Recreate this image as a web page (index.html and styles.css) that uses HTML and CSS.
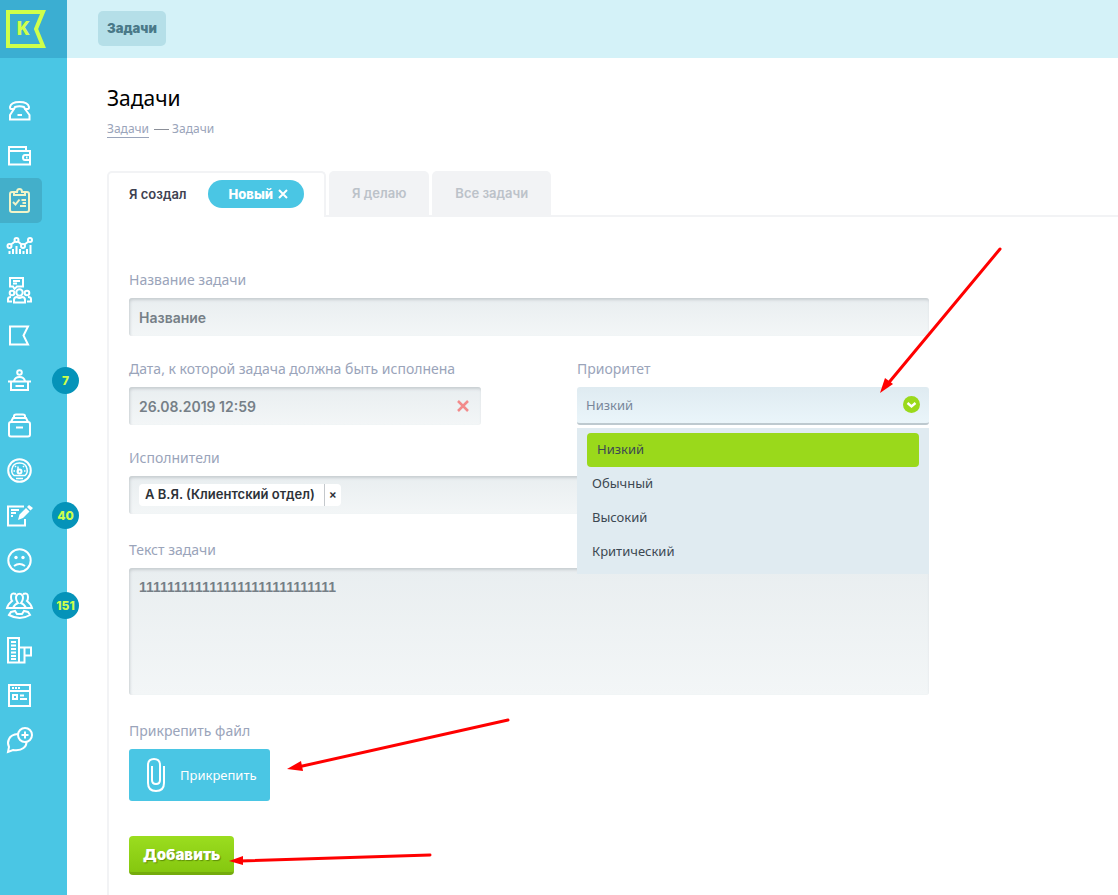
FILE: index.html
```
<!DOCTYPE html>
<html lang="ru">

<head>
    <meta charset="UTF-8">
    <meta name="viewport" content="width=device-width, initial-scale=1.0">
    <title>Задачи</title>
    <link rel="stylesheet" href="styles.css">
</head>

<body>
    <aside class="sidebar">
        <a class="logo" href="#" aria-label="K">
            <svg width="40" height="38" viewBox="0 0 40 38">
                <path d="M2 2H37L30 19L37 36H2Z" fill="none" stroke="#ceff4b" stroke-width="4" />
                <text class="logo-letter" x="10" y="25">K</text>
            </svg>
        </a>
        <nav class="menu">
            <a class="menu-item" href="#" aria-label="Звонки">
                <svg class="icon" viewBox="0 0 26 26">
                    <path d="M8 9L7 11H4Q3 11 3 9Q4 4 12.500 4T22 9Q22 11 21 11H18L17 9Q12.500 7.500 8 9ZM7 11L3 17V21.500H22.500V17L18 11M10.500 17H15" />
                </svg>
            </a>
            <a class="menu-item" href="#" aria-label="Кошелёк">
                <svg class="icon" viewBox="0 0 26 26">
                    <path d="M2 8V4H19V8M2 8H23V21.500H2ZM23 12H18Q16 12 16 14.500T18 17H23M19 14.500H20.500" />
                </svg>
            </a>
            <a class="menu-item active" href="#" aria-label="Задачи">
                <svg class="icon" viewBox="0 0 26 26">
                    <path d="M7 4H5Q3 4 3 6V22Q3 24 5 24H20Q22 24 22 22V6Q22 4 20 4H18M7 7V4H10Q10 1 12.500 1T15 4H18V7ZM6 14L8.500 16.500L12.500 11.500M14.500 12H19M15.500 15H19M13 18H19" />
                </svg>
            </a>
            <a class="menu-item" href="#" aria-label="Статистика">
                <svg class="icon" viewBox="0 0 26 26">
                    <circle cx="2.500" cy="13" r="2" />
                    <circle cx="9.500" cy="7" r="2" />
                    <circle cx="16" cy="13" r="2" />
                    <circle cx="23" cy="7" r="2" />
                    <path d="M4 11.500L8 8.500M11 8.500L14.500 11.500M17.500 11.500L21.500 8.500M2.500 18V21M6 16V21M9.500 13V21M13 16V21M16.500 18V21M20 16V21M23.500 12V21" />
                </svg>
            </a>
            <a class="menu-item" href="#" aria-label="Совещания">
                <svg class="icon" viewBox="0 0 26 26">
                    <path d="M3 0H16V8.500H10L7.500 11L6 8.500H3ZM6 3H13M6 5.500H10" />
                    <circle cx="12.500" cy="14.500" r="3.200" />
                    <circle cx="5" cy="15" r="2.300" />
                    <circle cx="20" cy="15" r="2.300" />
                    <path d="M7 24.500V22Q7 19 10 19Q12.500 21 15 19Q18 19 18 22V24.500ZM5 23.500H1V21Q1 19 4 19M20 23.500H24V21Q24 19 21 19" />
                </svg>
            </a>
            <a class="menu-item" href="#" aria-label="Флаг">
                <svg class="icon" viewBox="0 0 26 26">
                    <path d="M3 3.500H21L16.500 12.500L21 21.500H3Z" />
                </svg>
            </a>
            <a class="menu-item" href="#" aria-label="Ресепшен">
                <svg class="icon" viewBox="0 0 26 26">
                    <circle cx="12.500" cy="4.500" r="2.300" />
                    <path d="M7 13Q8 9 12.500 9T18 13M1 13.500H24M4 14V22H21V14M8.500 18H17" />
                </svg>
                <span class="badge">7</span>
            </a>
            <a class="menu-item" href="#" aria-label="Архив">
                <svg class="icon" viewBox="0 0 26 26">
                    <path d="M4 9L6 5H19L21 9M7 5V3Q7 1.500 9 1.500H16Q18 1.500 18 3V5M9 14.500H16" />
                    <rect x="2" y="9" width="21" height="14.500" rx="2" />
                </svg>
            </a>
            <a class="menu-item" href="#" aria-label="Показатели">
                <svg class="icon" viewBox="0 0 26 26">
                    <circle cx="12.500" cy="12.500" r="11.300" />
                    <path class="thin" d="M7 17.500Q4 15 5 11Q6 5 12.500 5Q19 5 20 11Q21 15 18 17.500ZM11 8.500V15M8 8L9 9M17 8L16 9M6.500 13H8M18.500 13H17M9 20.500H16" />
                    <circle cx="12.500" cy="13.500" r="2" />
                </svg>
            </a>
            <a class="menu-item" href="#" aria-label="Заметки">
                <svg class="icon" viewBox="0 0 26 26">
                    <path d="M17 3.500H1V22.500H18V16M4 7H12M4 10H9M4 13H6" />
                    <path class="filled" d="M11 17L12.500 11.500L19 5L22.500 8.500L16 15ZM20 4L22 2L26 5L23.500 7.500Z" />
                </svg>
                <span class="badge">40</span>
            </a>
            <a class="menu-item" href="#" aria-label="Жалобы">
                <svg class="icon" viewBox="0 0 26 26">
                    <circle cx="12.500" cy="12.500" r="11.200" />
                    <path d="M7 18Q12.500 14 18 18" />
                    <circle class="filled" cx="9" cy="9.500" r="1.700" />
                    <circle class="filled" cx="16" cy="9.500" r="1.700" />
                </svg>
            </a>
            <a class="menu-item" href="#" aria-label="Клиенты">
                <svg class="icon" viewBox="0 0 26 26">
                    <path d="M6 15Q8 11 11 10Q8 6 9.500 2.500Q12.500 -1 15.500 2.500Q17 6 14 10Q17 11 19 15ZM9 1Q4 -1 4 4Q4 7 5 8Q1 11 0 15H6M16 1Q21 -1 21 4Q21 7 20 8Q24 11 25 15H19M4 19L8 18L10 21H15L17 18L21 19L23 22Q13 28 2 22Z" />
                </svg>
                <span class="badge">151</span>
            </a>
            <a class="menu-item" href="#" aria-label="Здания">
                <svg class="icon" viewBox="0 0 26 26">
                    <path d="M1 0H12V24.500H1ZM12 9.500H24V17.500H18M17.500 9.500V24.500H12M4 4H9M4 7.500H9M4 11H9M4 14.500H9M4 18H9M4 21H9" />
                </svg>
            </a>
            <a class="menu-item" href="#" aria-label="Сайт">
                <svg class="icon" viewBox="0 0 26 26">
                    <path d="M2 2H23V23H2ZM2 8H23M5 5H7M8 5H10M11 5H13M6 12H10V16H6ZM13 12.500H17M13 16H20" />
                </svg>
            </a>
            <a class="menu-item" href="#" aria-label="Чат">
                <svg class="icon" viewBox="0 0 26 26">
                    <circle cx="18" cy="7" r="7" />
                    <path d="M18 3.500V10.500M14.500 7H21.500M11 6Q4 6.500 2 11Q0 15 2 19L1 24L6 22Q13 23 16.500 20Q19.500 18 19.500 14" />
                </svg>
            </a>
        </nav>
    </aside>

    <div class="page">
        <header class="topbar">
            <a class="topbar-link" href="#">Задачи</a>
        </header>

        <main class="content">
            <h1>Задачи</h1>
            <div class="breadcrumbs"><a href="#">Задачи</a><span class="dash"></span>Задачи</div>

            <div class="tabs">
                <div class="tab current">
                    <a href="#">Я создал</a>
                    <button class="pill" type="button">Новый
                        <svg width="10" height="10" viewBox="0 0 10 10"><path d="M1 1L9 9M9 1L1 9" stroke="#fff" stroke-width="2" /></svg>
                    </button>
                </div>
                <a class="tab" href="#">Я делаю</a>
                <a class="tab" href="#">Все задачи</a>
            </div>

            <form class="panel">
                <div class="field">
                    <label for="name">Название задачи</label>
                    <input id="name" class="box" type="text" value="Название">
                </div>
                <div class="row">
                    <div class="field">
                        <label for="date">Дата, к которой задача должна быть исполнена</label>
                        <div class="box date">
                            <input id="date" type="text" value="26.08.2019 12:59">
                            <button type="button" aria-label="Очистить">
                                <svg width="12" height="12" viewBox="0 0 12 12"><path d="M1 1L11 11M11 1L1 11" stroke="#f28b8b" stroke-width="2.500" /></svg>
                            </button>
                        </div>
                    </div>
                    <div class="field priority">
                        <label for="priority">Приоритет</label>
                        <select id="priority">
                            <option>Низкий</option>
                            <option>Обычный</option>
                            <option>Высокий</option>
                            <option>Критический</option>
                        </select>
                        <svg class="select-arrow" viewBox="0 0 17 17">
                            <circle cx="8.500" cy="8.500" r="8.500" fill="#9ad91b" />
                            <path d="M4.500 7L8.500 10.500L12.500 7" fill="none" stroke="#fff" stroke-width="2.400" />
                        </svg>
                        <ul class="options">
                            <li class="selected">Низкий</li>
                            <li>Обычный</li>
                            <li>Высокий</li>
                            <li>Критический</li>
                        </ul>
                    </div>
                </div>
                <div class="field">
                    <label for="performers">Исполнители</label>
                    <div class="box performers">
                        <span class="tag">А В.Я. (Клиентский отдел)<button type="button">×</button></span>
                        <input id="performers" type="text">
                    </div>
                </div>
                <div class="field text-field">
                    <label for="text">Текст задачи</label>
                    <textarea id="text" class="box">1111111111111111111111111111</textarea>
                </div>
                <div class="field text-field">
                    <label for="attach">Прикрепить файл</label>
                    <button id="attach" class="attach" type="button">
                        <svg width="18" height="36" viewBox="0 0 18 36">
                            <path d="M17 9V26Q17 34 9 34T1 26V8Q1 2 7 2T13 8V23Q13 27 9 27T5 23V9" fill="none" stroke="#fff" stroke-width="2" />
                        </svg>
                        Прикрепить
                    </button>
                </div>
                <button class="submit" type="submit">Добавить</button>
            </form>
        </main>
    </div>

    <!-- hint arrows -->
    <svg class="hints" width="1118" height="895" viewBox="0 0 1118 895">
        <path d="M1000 249L886 386M508 720L298 767M430 855L240 861" />
        <polygon points="880,393 885,378 893,384" />
        <polygon points="287,769 301,761 303,771" />
        <polygon points="229,861 243,856 243,865" />
    </svg>
</body>

</html>
```
FILE: styles.css
```
* {
    box-sizing: border-box;
    margin: 0;
    padding: 0;
}

body {
    display: flex;
    position: relative;
    min-height: 100vh;
    overflow: hidden;
    background: #fff;
    color: #000;
    font-family: "Noto Sans", sans-serif;
    font-size: 14px;
}

a {
    color: inherit;
    text-decoration: none;
}

button,
input,
select,
textarea {
    border: none;
    outline: none;
    background: none;
    font: inherit;
    color: inherit;
}

button {
    cursor: pointer;
}

/* sidebar */

.sidebar {
    flex: 0 0 67px;
    background: #4ac6e4;
}

.logo {
    display: block;
    height: 58px;
    padding: 10px 6px;
    background: #3baed2;
}

.logo svg {
    display: block;
}

.logo-letter {
    font-family: "Noto Sans", sans-serif;
    font-size: 20px;
    font-weight: 800;
    fill: #ceff4b;
}

.menu {
    padding-top: 30px;
}

.menu-item {
    display: flex;
    align-items: center;
    position: relative;
    width: 42px;
    height: 45px;
    padding-left: 7px;
    color: #fff;
}

.menu-item.active {
    border-radius: 0 5px 5px 0;
    background: #43afca;
    color: #f1f5c8;
}

.icon {
    width: 26px;
    height: 26px;
    overflow: visible;
    fill: none;
    stroke: currentColor;
    stroke-width: 2;
}

.icon .thin {
    stroke-width: 1.5;
}

.icon .filled {
    fill: currentColor;
    stroke: none;
}

.badge {
    position: absolute;
    left: 52px;
    top: 9px;
    width: 27px;
    height: 27px;
    border-radius: 50%;
    background: #0593b9;
    color: #ceff4b;
    font-family: Inter, sans-serif;
    font-size: 12px;
    font-weight: 800;
    line-height: 27px;
    text-align: center;
}

/* page */

.page {
    flex: 1;
    min-width: 0;
}

.topbar {
    height: 58px;
    padding: 11px 31px;
    background: #d4f2f8;
}

.topbar-link {
    display: inline-block;
    height: 35px;
    padding: 0 9px;
    border-radius: 5px;
    background: #b5dfe8;
    color: #4a7988;
    font-family: Inter, sans-serif;
    font-size: 13px;
    font-weight: 900;
    line-height: 35px;
}

.content {
    padding: 26px 0 0 40px;
}

h1 {
    font-size: 21px;
    font-weight: 400;
    line-height: 28px;
}

.breadcrumbs {
    display: flex;
    align-items: flex-start;
    margin-top: 8px;
    color: #9aa4ba;
    font-size: 12px;
    line-height: 17px;
}

.breadcrumbs a {
    border-bottom: 1px solid #9aa4ba;
}

.breadcrumbs .dash {
    align-self: center;
    width: 15px;
    height: 1px;
    margin: 0 3px 0 5px;
    background: #8b8f98;
}

.tabs {
    display: flex;
    gap: 3px;
    position: relative;
    margin-top: 33px;
    font-family: Inter, sans-serif;
    font-size: 13px;
    font-weight: 600;
}

.tab {
    height: 44px;
    padding: 0 23px;
    border-radius: 5px 5px 0 0;
    background: #f2f3f5;
    color: #bcc2c9;
    line-height: 44px;
}

.tab.current {
    display: flex;
    align-items: center;
    gap: 21px;
    height: 46px;
    margin-bottom: -2px;
    padding: 0 20px 2px;
    border: 2px solid #f2f3f5;
    border-bottom: none;
    background: #fff;
    color: #3e4150;
}

.pill {
    display: flex;
    align-items: center;
    gap: 5px;
    height: 28px;
    padding: 0 16px 0 21px;
    border-radius: 14px;
    background: #4ac6e4;
    color: #fff;
    font-weight: 800;
}

.panel {
    min-height: 680px;
    padding: 53px 20px 0;
    border-top: 2px solid #f2f3f5;
    border-left: 2px solid #f2f3f5;
}

.field {
    display: flex;
    flex-direction: column;
    gap: 8px;
    max-width: 800px;
    margin-bottom: 23px;
}

.field label {
    color: #9aa4ba;
    font-size: 14px;
    line-height: 20px;
}

.row {
    display: grid;
    grid-template-columns: 1fr 1fr;
    gap: 96px;
    max-width: 800px;
}

.box {
    width: 100%;
    height: 38px;
    padding: 0 10px;
    border-radius: 3px;
    background: linear-gradient(#e9eef0, #f3f6f7);
    box-shadow: inset 1px 2px 3px #c8ced1;
    color: #767f87;
    font-family: Inter, sans-serif;
    font-size: 14px;
    font-weight: 600;
}

.date {
    display: flex;
    align-items: center;
}

.date input {
    flex: 1;
    min-width: 0;
}

.date button {
    width: 16px;
    height: 16px;
    line-height: 12px;
}

.priority {
    position: relative;
}

.priority select {
    width: 100%;
    height: 38px;
    padding: 0 9px;
    border-bottom: 2px solid #bdc9cf;
    border-radius: 3px;
    background: linear-gradient(#dfebf1, #eaf5fa);
    color: #78869a;
    font-size: 13px;
    appearance: none;
}

.select-arrow {
    position: absolute;
    right: 9px;
    top: 37px;
    width: 17px;
    height: 17px;
    pointer-events: none;
}

.options {
    position: absolute;
    top: 69px;
    left: 0;
    right: 0;
    z-index: 1;
    padding: 5px 10px;
    background: #e0ebf1;
    color: #3c4852;
    font-size: 13px;
    line-height: 32px;
    list-style: none;
}

.options li {
    padding: 0 0 2px 5px;
}

.options .selected {
    padding-left: 10px;
    border-radius: 4px;
    background: #9ad91b;
}

.performers {
    display: flex;
    align-items: center;
}

.performers input {
    flex: 1;
    min-width: 0;
}

.tag {
    display: flex;
    height: 22px;
    padding-left: 6px;
    border-radius: 4px;
    background: #fff;
    color: #2d3238;
    font-size: 13px;
    line-height: 21px;
}

.tag button {
    width: 17px;
    margin-left: 9px;
    padding-bottom: 2px;
    border-left: 1px solid #c4c8cc;
    font-size: 12px;
    line-height: 18px;
}

.text-field {
    margin: 26px 0 0;
}

textarea.box {
    height: 127px;
    padding: 9px 10px;
    font-family: "Liberation Sans", sans-serif;
    line-height: 20px;
    resize: none;
}

.attach {
    display: flex;
    align-items: center;
    align-self: flex-start;
    gap: 15px;
    height: 52px;
    padding: 0 13px 0 18px;
    border-radius: 3px;
    background: #4ac6e4;
    color: #fff;
    font-size: 13px;
}

.submit {
    height: 39px;
    margin-top: 35px;
    padding: 0 14px;
    border-bottom: 3px solid #74ab0c;
    border-radius: 4px;
    background: linear-gradient(#9bdd1f, #85c70f);
    color: #fff;
    font-family: Inter, sans-serif;
    font-size: 15px;
    font-weight: 900;
    text-shadow: 1px 1px 1px #5f8f0a;
}

.hints {
    position: absolute;
    top: 0;
    left: 0;
    z-index: 2;
    fill: #f00;
    pointer-events: none;
}

.hints path {
    fill: none;
    stroke: #f00;
    stroke-width: 3;
    stroke-linecap: round;
}
```
